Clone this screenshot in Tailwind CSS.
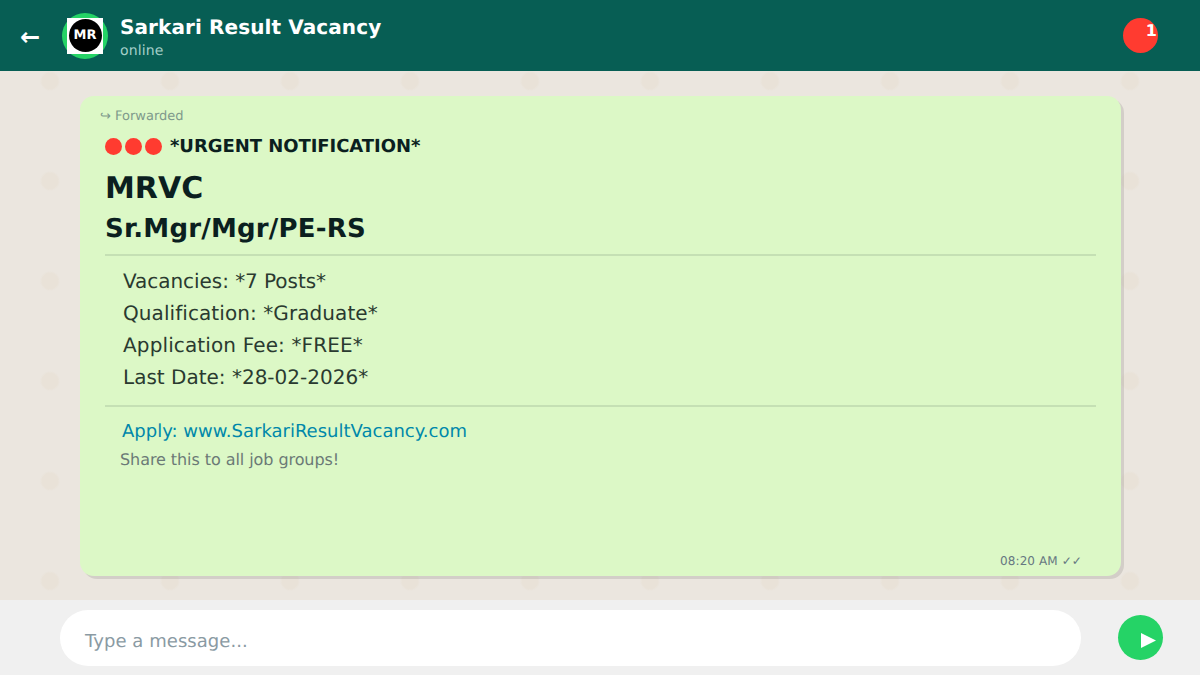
<!DOCTYPE html>
<html lang="en">
<head>
  <meta charset="UTF-8" />
  <title>Sarkari Result Vacancy</title>
  <script src="https://cdn.jsdelivr.net/npm/@tailwindcss/browser@4"></script>
</head>
<body class="w-[1200px] h-[675px] overflow-hidden flex flex-col bg-[#ebe6df] font-['DejaVu_Sans',sans-serif] [text-rendering:geometricPrecision]">

  <!-- Header -->
  <header class="h-[71px] shrink-0 bg-[#075e54] flex items-center pl-[20px] pr-[42px]">
    <span class="w-[20px] mt-[2px] text-[24px] leading-none text-white font-bold">←</span>
    <div class="ml-[22px] w-[46px] h-[46px] rounded-full bg-[#25d366] flex items-center justify-center">
      <div class="w-[36px] h-[36px] bg-white flex items-center justify-center">
        <div class="w-[33px] h-[33px] rounded-full bg-black text-white text-[13px] font-bold flex items-center justify-center">MR</div>
      </div>
    </div>
    <div class="ml-[12px] mt-[4px] flex flex-col">
      <span class="text-[20px] leading-[24px] font-bold text-white tracking-[0.1px]">Sarkari Result Vacancy</span>
      <span class="text-[14px] leading-[20px] mt-[2px] text-[#a3cfc9] tracking-[0.15px]">online</span>
    </div>
    <div class="ml-auto w-[35px] h-[35px] rounded-full bg-[#ff3b30] flex justify-end">
      <span class="text-white text-[16px] leading-[26px] font-bold pr-[1px]">1</span>
    </div>
  </header>

  <!-- Chat -->
  <main class="flex-1 pt-[25px] pb-[24px] pl-[80px] pr-[79px] bg-[radial-gradient(circle_at_50px_10px,#e9e2d8_8px,transparent_10px)] bg-[size:120px_100px]">
    <div class="relative h-full rounded-[14px] bg-[#dcf8c6] shadow-[3px_3px_0_rgba(0,0,0,0.1)] pt-[13px] pl-[20px] pr-[25px]">
      <div class="text-[13px] leading-[16px] text-[#7f9a8c]">↪ Forwarded</div>
      <div class="mt-[8px] ml-[5px] flex items-center h-[26px]">
        <span class="w-[17px] h-[17px] rounded-full bg-[#ff3b30]"></span>
        <span class="ml-[3px] w-[17px] h-[17px] rounded-full bg-[#ff3b30]"></span>
        <span class="ml-[3px] w-[17px] h-[17px] rounded-full bg-[#ff3b30]"></span>
        <span class="ml-[8px] text-[18px] font-bold text-[#0b1f1f] tracking-[-0.05px]">*URGENT NOTIFICATION*</span>
      </div>
      <h1 class="ml-[5px] mt-[11px] text-[30px] leading-[38px] font-bold text-[#0b1f1f]">MRVC</h1>
      <h2 class="ml-[5px] mt-[2px] text-[26px] leading-[38px] font-bold text-[#0b1f1f] tracking-[0.2px]">Sr.Mgr/Mgr/PE-RS</h2>
      <div class="ml-[5px] mt-[6px] border-t-2 border-[#c5e0b4] pt-[9px] pl-[18px] text-[20px] leading-[32px] text-[#2a3a30]">
        <p class="tracking-[-0.05px]">Vacancies: *7 Posts*</p>
        <p class="tracking-[0.08px]">Qualification: *Graduate*</p>
        <p class="tracking-[0.13px]">Application Fee: *FREE*</p>
        <p>Last Date: *28-02-2026*</p>
      </div>
      <div class="ml-[5px] mt-[12px] border-t-2 border-[#c5e0b4] pt-[13px]">
        <a class="block ml-[17px] text-[18px] leading-[24px] text-[#0088aa]">Apply: www.SarkariResultVacancy.com</a>
        <p class="ml-[15px] mt-[4px] text-[16px] leading-[24px] text-[#6b7a76] tracking-[-0.07px]">Share this to all job groups!</p>
      </div>
      <div class="absolute right-[39px] bottom-[7px] text-[12px] leading-[16px] text-[#667781] tracking-[0.1px]">08:20 AM ✓✓</div>
    </div>
  </main>

  <!-- Input bar -->
  <footer class="h-[75px] shrink-0 bg-[#f0f0f0] flex items-center pl-[60px] pr-[37px]">
    <div class="w-[1021px] h-[56px] mt-[1px] rounded-full bg-white flex items-center pl-[25px] pt-[6px] text-[18px] text-[#8a9aa3] tracking-[0.05px]">Type a message...</div>
    <div class="ml-auto w-[45px] h-[45px] rounded-full bg-[#25d366] flex items-center justify-center">
      <svg width="15" height="15" viewBox="0 0 15 15" class="mt-[6px] ml-[15px]"><path d="M0 0 L15 7.5 L0 15 Z" fill="#fff"/></svg>
    </div>
  </footer>

</body>
</html>
